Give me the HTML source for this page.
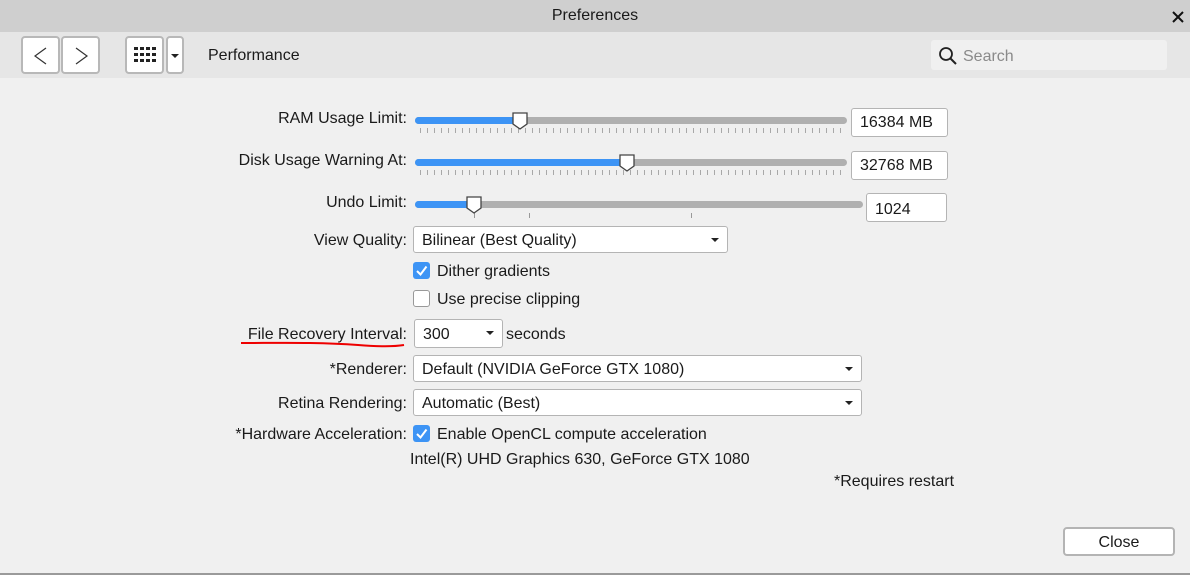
<!DOCTYPE html>
<html><head><style>
*{box-sizing:border-box;margin:0;padding:0}
body{width:1190px;height:575px;background:#f0f0f0;font-family:"Liberation Sans",sans-serif;font-size:16px;line-height:22px;color:#1a1a1a;position:relative;overflow:hidden}
.a{position:absolute}
.lbl{position:absolute;right:783px;white-space:nowrap}
.track{position:absolute;height:7px;border-radius:4px;background:#b0b0b0}
.fill{position:absolute;left:0;top:0;bottom:0;background:#3d94f5;border-radius:4px}
.thumb{position:absolute;width:16px;height:18px}
.ticks{position:absolute;height:5px;background:repeating-linear-gradient(90deg,#a8a8a8 0 1px,transparent 1px 7px)}
.box{position:absolute;background:#fff;border:1px solid #b4b4b4;border-radius:3px;padding-left:8px;padding-top:1px;line-height:26px}
.dd::after{content:"";position:absolute;right:8px;top:11px;border-left:4px solid transparent;border-right:4px solid transparent;border-top:4px solid #222}
.cb{position:absolute;width:17px;height:17px;border-radius:3px}
.cb.on{background:#3d94f5}
.cb.off{background:#fff;border:1px solid #999}
</style></head><body>
<div class="a" style="left:0;top:0;width:1190px;height:32px;background:#cfcfcf"></div>
<div class="a" style="left:0;top:5px;width:1190px;text-align:center;font-size:16px">Preferences</div>
<svg class="a" style="left:1171px;top:10px" width="14" height="14"><path d="M2 2L12 12M12 2L2 12" stroke="#111" stroke-width="2"/></svg>
<div class="a" style="left:0;top:32px;width:1190px;height:46px;background:#e6e6e6"></div>
<div class="a" style="left:21px;top:36px;width:39px;height:38px;background:#fff;border:2px solid #b8b8b8;border-radius:4px"></div>
<div class="a" style="left:61px;top:36px;width:39px;height:38px;background:#fff;border:2px solid #b8b8b8;border-radius:4px"></div>
<svg class="a" style="left:32px;top:45px" width="18" height="22"><path d="M14 3L3 11L14 19" fill="none" stroke="#333" stroke-width="1.2"/></svg>
<svg class="a" style="left:72px;top:45px" width="18" height="22"><path d="M4 3L15 11L4 19" fill="none" stroke="#333" stroke-width="1.2"/></svg>
<div class="a" style="left:125px;top:36px;width:39px;height:38px;background:#fff;border:2px solid #b8b8b8;border-radius:4px"></div>
<svg class="a" style="left:134px;top:47px" width="24" height="18"><g fill="#222">
<rect x="0" y="0" width="4" height="3"/><rect x="6" y="0" width="4" height="3"/><rect x="12" y="0" width="4" height="3"/><rect x="18" y="0" width="4" height="3"/>
<rect x="0" y="6" width="4" height="3"/><rect x="6" y="6" width="4" height="3"/><rect x="12" y="6" width="4" height="3"/><rect x="18" y="6" width="4" height="3"/>
<rect x="0" y="12" width="4" height="3"/><rect x="6" y="12" width="4" height="3"/><rect x="12" y="12" width="4" height="3"/><rect x="18" y="12" width="4" height="3"/></g></svg>
<div class="a" style="left:166px;top:36px;width:18px;height:38px;background:#fff;border:2px solid #b8b8b8;border-radius:4px"></div>
<div class="a" style="left:171px;top:54px;border-left:4px solid transparent;border-right:4px solid transparent;border-top:4px solid #222"></div>
<div class="a" style="left:208px;top:45px">Performance</div>
<div class="a" style="left:931px;top:40px;width:236px;height:30px;background:#f0f0f0;border-radius:3px"></div>
<svg class="a" style="left:938px;top:46px" width="20" height="20"><circle cx="8" cy="8" r="6" fill="none" stroke="#222" stroke-width="1.8"/><path d="M12.5 12.5L18 18" stroke="#222" stroke-width="2"/></svg>
<div class="a" style="left:963px;top:46px;color:#8a8a8a">Search</div>

<div class="lbl" style="top:108px">RAM Usage Limit:</div>
<div class="track" style="left:415px;top:117px;width:432px"><div class="fill" style="width:106px"></div></div>
<div class="ticks" style="left:420px;top:128px;width:422px"></div>
<svg class="thumb" style="left:512px;top:112px"><path d="M1 1H15V12L8 17L1 12Z" fill="#fff" stroke="#444" stroke-width="1.3"/></svg>
<div class="box" style="left:851px;top:108px;width:97px;height:29px">16384 MB</div>

<div class="lbl" style="top:150px">Disk Usage Warning At:</div>
<div class="track" style="left:415px;top:159px;width:432px"><div class="fill" style="width:213px"></div></div>
<div class="ticks" style="left:420px;top:170px;width:422px"></div>
<svg class="thumb" style="left:619px;top:154px"><path d="M1 1H15V12L8 17L1 12Z" fill="#fff" stroke="#444" stroke-width="1.3"/></svg>
<div class="box" style="left:851px;top:151px;width:97px;height:29px">32768 MB</div>

<div class="lbl" style="top:192px">Undo Limit:</div>
<div class="track" style="left:415px;top:201px;width:448px"><div class="fill" style="width:60px"></div></div>
<div class="a" style="left:474px;top:213px;width:1px;height:5px;background:#999"></div>
<div class="a" style="left:529px;top:213px;width:1px;height:5px;background:#999"></div>
<div class="a" style="left:691px;top:213px;width:1px;height:5px;background:#999"></div>
<svg class="thumb" style="left:466px;top:196px"><path d="M1 1H15V12L8 17L1 12Z" fill="#fff" stroke="#444" stroke-width="1.3"/></svg>
<div class="box" style="left:866px;top:193px;width:81px;height:29px;line-height:29px">1024</div>

<div class="lbl" style="top:230px">View Quality:</div>
<div class="box dd" style="left:413px;top:226px;width:315px;height:27px">Bilinear (Best Quality)</div>

<div class="cb on" style="left:413px;top:262px"></div>
<svg class="a" style="left:413px;top:262px" width="17" height="17"><path d="M4 9L7.5 12.5L13.5 4.5" fill="none" stroke="#fff" stroke-width="2"/></svg>
<div class="a" style="left:437px;top:261px">Dither gradients</div>
<div class="cb off" style="left:413px;top:290px"></div>
<div class="a" style="left:437px;top:289px">Use precise clipping</div>

<div class="lbl" style="top:324px">File Recovery Interval:</div>
<svg class="a" style="left:238px;top:340px" width="170" height="10"><path d="M3 3C40 3 80 2 120 5C145 7 160 6 166 5" fill="none" stroke="#e00" stroke-width="2"/></svg>
<div class="box dd" style="left:414px;top:319px;width:89px;height:29px;line-height:28px">300</div>
<div class="a" style="left:506px;top:324px">seconds</div>

<div class="lbl" style="top:359px">*Renderer:</div>
<div class="box dd" style="left:413px;top:355px;width:449px;height:27px">Default (NVIDIA GeForce GTX 1080)</div>
<div class="lbl" style="top:393px">Retina Rendering:</div>
<div class="box dd" style="left:413px;top:389px;width:449px;height:27px">Automatic (Best)</div>

<div class="lbl" style="top:424px">*Hardware Acceleration:</div>
<div class="cb on" style="left:413px;top:425px"></div>
<svg class="a" style="left:413px;top:425px" width="17" height="17"><path d="M4 9L7.5 12.5L13.5 4.5" fill="none" stroke="#fff" stroke-width="2"/></svg>
<div class="a" style="left:437px;top:424px">Enable OpenCL compute acceleration</div>
<div class="a" style="left:410px;top:449px">Intel(R) UHD Graphics 630, GeForce GTX 1080</div>
<div class="a" style="left:834px;top:471px">*Requires restart</div>

<div class="a" style="left:1063px;top:527px;width:112px;height:29px;background:#fff;border:2px solid #b4b4b4;border-radius:4px;text-align:center;line-height:27px">Close</div>
<div class="a" style="left:0;top:573px;width:1190px;height:2px;background:#9a9a9a"></div>
</body></html>
